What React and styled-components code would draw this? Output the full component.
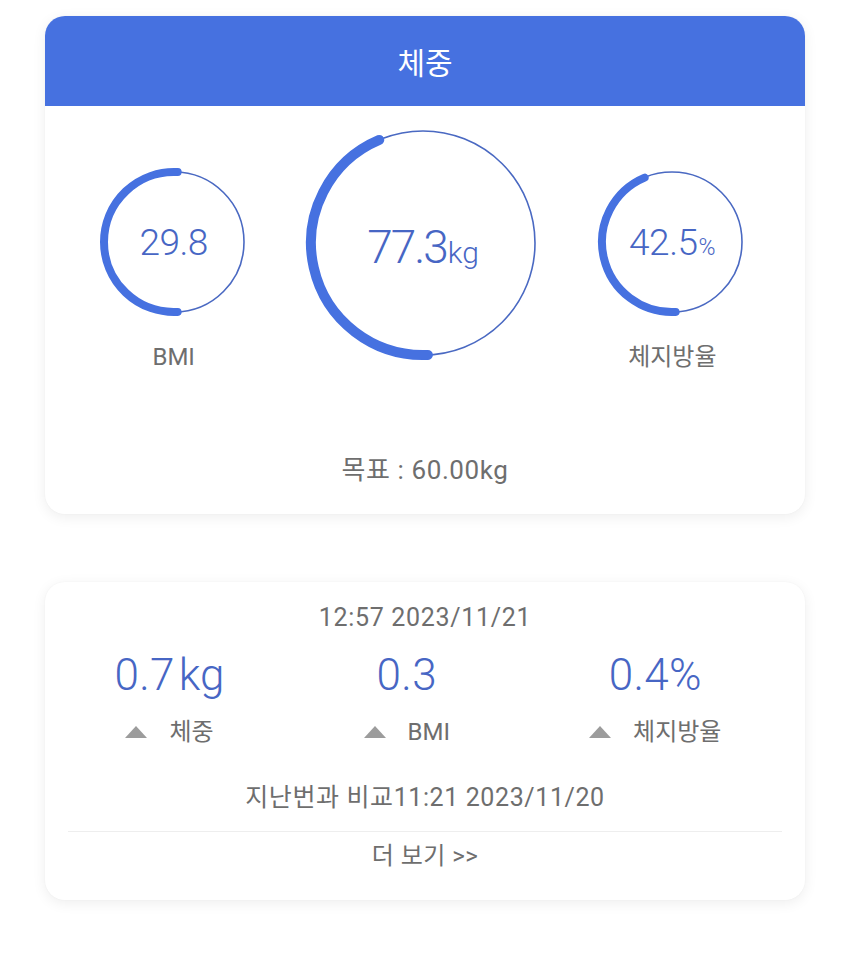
import styled, { createGlobalStyle } from 'styled-components';

const GlobalStyle = createGlobalStyle`
  body {
    margin: 0;
    background: #ffffff;
    font-family: Roboto, 'Noto Sans CJK KR', sans-serif;
  }
`;

const BLUE = '#4671e0';
const TEXT_BLUE = '#4766c4';
const GRAY = '#6e6e6e';

function polar(c, r, deg) {
  const a = ((deg - 90) * Math.PI) / 180;
  return [c + r * Math.cos(a), c + r * Math.sin(a)];
}

function arcPath(c, r, start, end) {
  const [x1, y1] = polar(c, r, start);
  const [x2, y2] = polar(c, r, end);
  const large = end - start > 180 ? 1 : 0;
  return `M ${x1} ${y1} A ${r} ${r} 0 ${large} 1 ${x2} ${y2}`;
}

function Gauge({ size, thick, start, end, children, big }) {
  const c = size / 2;
  const r = c - thick / 2 - 1;
  return (
    <GaugeWrap $size={size}>
      <svg width={size} height={size} viewBox={`0 0 ${size} ${size}`}>
        <circle cx={c} cy={c} r={r} fill="none" stroke="#4a69c2" strokeWidth="1.6" />
        <path d={arcPath(c, r, start, end)} fill="none" stroke={BLUE} strokeWidth={thick} strokeLinecap="round" />
      </svg>
      <GaugeValue $big={big}>{children}</GaugeValue>
    </GaugeWrap>
  );
}

function Change({ value, unit, label }) {
  return (
    <ChangeColumn>
      <ChangeValue>
        {value}
        {unit && <ChangeUnit>{unit}</ChangeUnit>}
      </ChangeValue>
      <ChangeLabel>
        <Triangle />
        {label}
      </ChangeLabel>
    </ChangeColumn>
  );
}

export default function App() {
  return (
    <Page>
      <GlobalStyle />
      <Card>
        <Header>체중</Header>
        <GaugeRow>
          <SmallColumn>
            <Gauge size={150} thick={8} start={177} end={363}>
              29.8
            </Gauge>
            <GaugeLabel>BMI</GaugeLabel>
          </SmallColumn>
          <BigColumn>
            <Gauge size={236} thick={10} start={177.5} end={337} big>
              77.3<Unit $big>kg</Unit>
            </Gauge>
          </BigColumn>
          <SmallColumn>
            <Gauge size={150} thick={8} start={177} end={337}>
              42.5<Unit>%</Unit>
            </Gauge>
            <GaugeLabel>체지방율</GaugeLabel>
          </SmallColumn>
        </GaugeRow>
        <Goal>목표 : 60.00kg</Goal>
      </Card>

      <Card>
        <Time>12:57 2023/11/21</Time>
        <ChangeRow>
          <Change value="0.7" unit="kg" label="체중" />
          <Change value="0.3" label="BMI" />
          <Change value="0.4%" label="체지방율" />
        </ChangeRow>
        <Compare>지난번과 비교11:21 2023/11/20</Compare>
        <Divider />
        <More>더 보기 &gt;&gt;</More>
      </Card>
    </Page>
  );
}

const Page = styled.div`
  padding: 16px 45px 40px;
  display: flex;
  flex-direction: column;
  gap: 68px;
`;

const Card = styled.div`
  background: #fff;
  border-radius: 20px;
  box-shadow: 0 3px 14px rgba(0, 0, 0, 0.07), 0 0 2px rgba(0, 0, 0, 0.04);
  overflow: hidden;
  display: flex;
  flex-direction: column;
  align-items: center;
`;

const Header = styled.div`
  align-self: stretch;
  height: 90px;
  background: ${BLUE};
  color: #fff;
  font-family: 'Noto Sans CJK KR', sans-serif;
  font-size: 30px;
  display: flex;
  align-items: center;
  justify-content: center;
`;

const GaugeRow = styled.div`
  align-self: stretch;
  display: grid;
  grid-template-columns: repeat(3, 1fr);
  padding: 16px 8px 0 4px;
  align-items: start;
`;

const SmallColumn = styled.div`
  display: flex;
  flex-direction: column;
  align-items: center;
  padding-top: 45px;
`;

const BigColumn = styled.div`
  display: flex;
  justify-content: center;
  padding-top: 3px;
`;

const GaugeWrap = styled.div`
  position: relative;
  width: ${(p) => p.$size}px;
  height: ${(p) => p.$size}px;

  svg {
    display: block;
  }
`;

const GaugeValue = styled.div`
  position: absolute;
  inset: 0;
  display: flex;
  justify-content: center;
  align-items: baseline;
  padding-top: ${(p) => (p.$big ? '99px' : '57px')};
  box-sizing: border-box;
  color: ${TEXT_BLUE};
  font-family: Roboto, sans-serif;
  font-weight: 300;
  font-size: ${(p) => (p.$big ? '46px' : '37px')};
  letter-spacing: ${(p) => (p.$big ? '-2px' : '-0.5px')};
  line-height: 1;
`;

const Unit = styled.span`
  font-size: ${(p) => (p.$big ? '30px' : '23px')};
  letter-spacing: 0;
  margin-left: 1px;
`;

const GaugeLabel = styled.div`
  margin-top: 25px;
  line-height: 30px;
  font-size: 24px;
  color: ${GRAY};
`;

const Goal = styled.div`
  margin-top: 83px;
  margin-bottom: 29px;
  line-height: 30px;
  font-size: 26px;
  letter-spacing: 0.6px;
  color: ${GRAY};
`;

const Time = styled.div`
  margin-top: 20px;
  line-height: 32px;
  font-size: 25px;
  letter-spacing: 0.7px;
  color: ${GRAY};
`;

const ChangeRow = styled.div`
  align-self: stretch;
  display: flex;
  justify-content: space-around;
  padding-right: 14px;
  margin-top: 16px;
`;

const ChangeColumn = styled.div`
  display: flex;
  flex-direction: column;
  align-items: center;
`;

const ChangeValue = styled.div`
  line-height: 50px;
  font-size: 44px;
  font-weight: 300;
  color: ${TEXT_BLUE};
  letter-spacing: 0.3px;
`;

const ChangeUnit = styled.span`
  letter-spacing: 0;
  margin-left: 4px;
`;

const ChangeLabel = styled.div`
  margin-top: 17px;
  display: flex;
  align-items: center;
  gap: 22px;
  line-height: 30px;
  font-size: 24px;
  color: ${GRAY};
`;

const Triangle = styled.span`
  width: 0;
  height: 0;
  border-left: 11px solid transparent;
  border-right: 11px solid transparent;
  border-bottom: 12px solid #9c9c9c;
`;

const Compare = styled.div`
  margin-top: 36px;
  line-height: 30px;
  font-size: 25px;
  letter-spacing: 0.6px;
  color: ${GRAY};
`;

const Divider = styled.div`
  align-self: stretch;
  margin: 18px 23px 0;
  height: 1px;
  background: #eeeeee;
`;

const More = styled.div`
  margin-top: 9px;
  margin-bottom: 29px;
  line-height: 30px;
  font-size: 24px;
  letter-spacing: 0.5px;
  color: ${GRAY};
`;
